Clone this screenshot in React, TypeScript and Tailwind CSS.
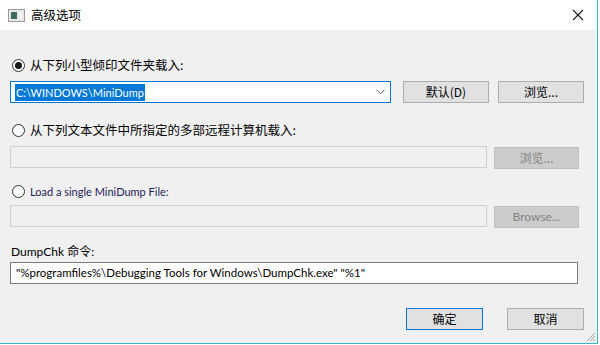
import React from "react";

const cjk = { fontFamily: '"Noto Sans CJK SC", "Noto Sans", sans-serif' };
const ui = { fontFamily: 'Lato, "Noto Sans CJK SC", sans-serif' };

function Radio({ checked }: { checked?: boolean }) {
  return (
    <div className="w-[13px] h-[13px] rounded-full border border-[#333333] bg-white flex items-center justify-center shrink-0">
      {checked && <div className="w-[7px] h-[7px] rounded-full bg-[#1a1a1a]" />}
    </div>
  );
}

function Btn({ children, disabled, def, w = "w-[86px]" }: { children: React.ReactNode; disabled?: boolean; def?: boolean; w?: string }) {
  const cls = disabled
    ? "bg-[#cccccc] border-[#bfbfbf] text-[#838383]"
    : def
    ? "bg-[#e1e1e1] border-[#0078d7] text-black"
    : "bg-[#e1e1e1] border-[#adadad] text-black";
  return (
    <div className={`${w} h-[22px] border ${cls} flex items-center justify-center text-[12px] leading-none`} style={cjk}>
      {children}
    </div>
  );
}

export default function App() {
  return (
    <div className="w-[600px] h-[345px] bg-white overflow-hidden">
      <div className="w-[598px] h-[344px] border-r border-b border-[#3cb7c4] flex flex-col">
        {/* title bar */}
        <div className="h-[30px] bg-white flex items-center pl-[8px] pr-[12px] shrink-0">
          <div className="w-[17px] h-[13px] border border-[#9a9a9a] bg-[#e8e8e8] flex p-[2px] gap-[2px]">
            <div className="w-[6px] h-full bg-[#3b6b5a]" />
            <div className="flex-1 h-full bg-[#f4f4f4]" />
          </div>
          <div className="ml-[6px] text-[12.5px] text-black leading-none" style={cjk}>高级选项</div>
          <div className="flex-1" />
          <svg width="12" height="12" viewBox="0 0 12 12" className="mr-[1px]">
            <path d="M1 1 L11 11 M11 1 L1 11" stroke="#1a1a1a" strokeWidth="1.1" />
          </svg>
        </div>
        {/* body */}
        <div className="flex-1 bg-[#f0f0f0] relative flex flex-col pl-[10px] pr-[13px]">
          <div className="mt-[28px] h-[14px] flex items-center gap-[5px] pl-[2px]">
            <Radio checked />
            <span className="text-[12.5px] text-black leading-none" style={cjk}>从下列小型倾印文件夹载入:</span>
          </div>
          <div className="mt-[9px] flex items-start">
            <div className="w-[381px] h-[22px] border border-[#0078d7] bg-white flex items-center pl-[4px] pr-[5px]">
              <span className="bg-[#0078d7] text-white text-[11px] leading-[17px] h-[17px] px-[1px]" style={ui}>C:\WINDOWS\MiniDump</span>
              <div className="flex-1" />
              <svg width="9" height="6" viewBox="0 0 9 6">
                <path d="M0.5 0.8 L4.5 4.8 L8.5 0.8" stroke="#555" strokeWidth="1" fill="none" />
              </svg>
            </div>
            <div className="ml-[12px]"><Btn>默认(D)</Btn></div>
            <div className="ml-[9px]"><Btn>浏览...</Btn></div>
          </div>
          <div className="mt-[20px] h-[14px] flex items-center gap-[5px] pl-[2px]">
            <Radio />
            <span className="text-[12.5px] text-black leading-none" style={cjk}>从下列文本文件中所指定的多部远程计算机载入:</span>
          </div>
          <div className="mt-[9px] flex items-start">
            <div className="w-[477px] h-[22px] border border-[#cfcfcf] bg-[#f0f0f0]" />
            <div className="ml-[7px] mt-[1px]"><Btn disabled w="w-[85px]">浏览...</Btn></div>
          </div>
          <div className="mt-[15px] h-[14px] flex items-center gap-[5px] pl-[2px]">
            <Radio />
            <span className="text-[11px] text-[#1c1c5a] leading-none" style={ui}>Load a single MiniDump File:</span>
          </div>
          <div className="mt-[7px] flex items-start">
            <div className="w-[477px] h-[22px] border border-[#cfcfcf] bg-[#f0f0f0]" />
            <div className="ml-[7px] mt-[1px]"><Btn disabled w="w-[85px]"><span style={ui}>Browse...</span></Btn></div>
          </div>
          <div className="mt-[17px] h-[14px] flex items-center pl-[1px]">
            <span className="text-[12px] text-black leading-none" style={ui}>DumpChk 命令:</span>
          </div>
          <div className="mt-[3px] w-[568px] h-[22px] border border-[#7a7a7a] bg-white flex items-center pl-[5px]">
            <span className="text-[11.5px] text-black leading-none whitespace-pre" style={ui}>"%programfiles%\Debugging Tools for Windows\DumpChk.exe" "%1"</span>
          </div>
          <div className="mt-[24px] flex justify-end pr-[0px]">
            <Btn def w="w-[77px]">确定</Btn>
            <div className="ml-[24px]"><Btn w="w-[77px]">取消</Btn></div>
          </div>
          <svg width="10" height="10" viewBox="0 0 10 10" className="absolute right-[1px] bottom-[1px]">
            <path d="M9 1 L1 9 M9 4 L4 9 M9 7 L7 9" stroke="#a0a0a0" strokeWidth="1" />
          </svg>
        </div>
      </div>
    </div>
  );
}
